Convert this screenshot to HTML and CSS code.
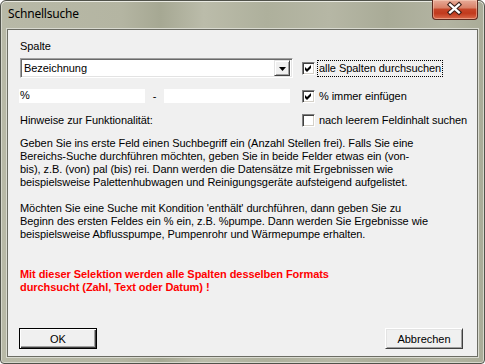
FILE: index.html
```html
<!DOCTYPE html>
<html lang="de">
<head>
  <meta charset="UTF-8">
  <title>Schnellsuche</title>
  <link rel="stylesheet" href="styles.css">
</head>
<body>
  <div class="window">
    <div class="titlebar">
      <span class="title">Schnellsuche</span>
      <span class="close">
        <svg width="46" height="20" viewBox="0 0 46 20">
          <path d="M18.5 5.5 L27.5 13.5 M27.5 5.5 L18.5 13.5" stroke="#3b2019" stroke-width="4.6" stroke-linecap="square"/>
          <path d="M18.5 5.5 L27.5 13.5 M27.5 5.5 L18.5 13.5" stroke="#ffffff" stroke-width="2.4" stroke-linecap="square"/>
        </svg>
      </span>
    </div>

    <div class="client">
      <div class="label">Spalte</div>

      <div class="row row-combo">
        <div class="combo">
          <span class="combo-text">Bezeichnung</span>
          <span class="combo-btn">
            <svg width="7" height="4" viewBox="0 0 7 4"><path d="M0 0 H7 L3.5 4 Z" fill="#000"/></svg>
          </span>
        </div>
        <div class="check">
          <span class="box checked">
            <svg width="9" height="9" viewBox="0 0 9 9"><path d="M1 3 L3 5 L7 1 L7 4 L3 8 L1 6 Z" fill="#000"/></svg>
          </span>
          <span class="check-text focus">alle Spalten durchsuchen</span>
        </div>
      </div>

      <div class="row row-range">
        <div class="field first">%</div>
        <span class="dash">-</span>
        <div class="field"></div>
        <div class="check">
          <span class="box checked">
            <svg width="9" height="9" viewBox="0 0 9 9"><path d="M1 3 L3 5 L7 1 L7 4 L3 8 L1 6 Z" fill="#000"/></svg>
          </span>
          <span class="check-text">% immer einfügen</span>
        </div>
      </div>

      <div class="row row-hint">
        <span class="hint-title">Hinweise zur Funktionalität:</span>
        <div class="check">
          <span class="box"></span>
          <span class="check-text">nach leerem Feldinhalt suchen</span>
        </div>
      </div>

      <p class="info">Geben Sie ins erste Feld einen Suchbegriff ein (Anzahl Stellen frei). Falls Sie eine<br>Bereichs-Suche durchführen möchten, geben Sie in beide Felder etwas ein (von-<br>bis), z.B. (von) pal (bis) rei. Dann werden die Datensätze mit Ergebnissen wie<br>beispielsweise Palettenhubwagen und Reinigungsgeräte aufsteigend aufgelistet.</p>
      <p class="info second">Möchten Sie eine Suche mit Kondition 'enthält' durchführen, dann geben Sie zu<br>Beginn des ersten Feldes ein % ein, z.B. %pumpe. Dann werden Sie Ergebnisse wie<br>beispielsweise Abflusspumpe, Pumpenrohr und Wärmepumpe erhalten.</p>

      <p class="warn">Mit dieser Selektion werden alle Spalten desselben Formats<br>durchsucht (Zahl, Text oder Datum) !</p>

      <div class="buttons">
        <button class="btn default">OK</button>
        <button class="btn">Abbrechen</button>
      </div>
    </div>
  </div>
</body>
</html>
```

FILE: styles.css
```css
* {
  box-sizing: border-box;
}
html, body {
  margin: 0;
}
body {
  width: 485px;
  height: 364px;
  overflow: hidden;
  background: #ffffff;
  font-family: "Liberation Sans", Arial, sans-serif;
  font-size: 11px;
  letter-spacing: -0.06px;
  color: #000;
}
.window {
  width: 485px;
  height: 364px;
  border: 1px solid #50524a;
  border-radius: 6px 6px 4px 4px;
  padding: 0 6px 6px 6px;
  display: flex;
  flex-direction: column;
  background: linear-gradient(90deg, #b8b9a7 0%, #b4b5a2 25%, #a6a893 33%, #bbbcaa 42%, #aeb09c 55%, #b6b7a5 68%, #a9ab97 80%, #b3b4a2 92%, #aaac98 100%);
  box-shadow: inset 0 1px 0 #e9eae2, inset 1px 0 0 #d6d7cc, inset -1px 0 0 #d6d7cc, inset 0 -1px 0 #d6d7cc;
}
.titlebar {
  height: 28px;
  display: flex;
  align-items: flex-start;
}
.title {
  padding: 5px 0 0 1px;
  font-family: "Noto Sans", "Open Sans", sans-serif;
  font-size: 12px;
  line-height: 16px;
  color: #000;
  letter-spacing: -0.2px;
}
.close {
  margin-left: auto;
  margin-top: -1px;
  width: 46px;
  height: 20px;
  border: 1px solid #5e2a1f;
  border-top: none;
  border-radius: 0 0 4px 4px;
  background: linear-gradient(180deg, #e7ab98 0%, #d98269 40%, #c54427 50%, #c13a1d 70%, #d9694a 100%);
  box-shadow: inset 0 0 0 1px rgba(255, 220, 200, 0.45);
  display: flex;
}
.close svg {
  margin: -1px 0 0 -1px;
}
.client {
  flex: 1;
  border: 1px solid #6c6d64;
  box-shadow: 0 0 0 1px #d9dad0;
  background: #f0f0f0;
  padding: 10px 12px 7px 12px;
  display: flex;
  flex-direction: column;
  line-height: 13px;
}
.label {
  height: 13px;
}
.row {
  display: flex;
  align-items: center;
  white-space: nowrap;
}
.row-combo {
  margin-top: 5px;
  height: 20px;
}
.row-range {
  margin-top: 11px;
  height: 14px;
}
.row-hint {
  margin-top: 11px;
  height: 13px;
}
.combo {
  width: 273px;
  height: 20px;
  flex-shrink: 0;
  border: 1px solid;
  border-color: #a0a0a0 #ffffff #ffffff #a0a0a0;
  box-shadow: inset 1px 1px 0 #696969, inset -1px -1px 0 #e3e3e3;
  background: #ffffff;
  display: flex;
  align-items: center;
  padding: 0 2px 0 2px;
}
.combo-text {
  flex: 1;
  padding-left: 1px;
}
.combo-btn {
  width: 16px;
  height: 16px;
  background: #f0f0f0;
  border: 1px solid;
  border-color: #e3e3e3 #404040 #404040 #e3e3e3;
  box-shadow: inset 1px 1px 0 #ffffff, inset -1px -1px 0 #a0a0a0;
  display: flex;
  align-items: center;
  justify-content: center;
}
.combo-btn svg {
  margin: 1px 0 0 1px;
}
.row-combo .check {
  margin-left: 9px;
}
.check {
  display: flex;
  align-items: center;
  flex-shrink: 0;
}
.box {
  width: 13px;
  height: 13px;
  flex-shrink: 0;
  background: #ffffff;
  border: 1px solid;
  border-color: #808080 #ffffff #ffffff #808080;
  box-shadow: inset 1px 1px 0 #404040, inset -1px -1px 0 #d4d0c8;
  display: flex;
  align-items: center;
  justify-content: center;
}
.check-text {
  margin-left: 2px;
  padding: 1px 1px;
  border: 1px solid transparent;
}
.check-text.focus {
  border: 1px dotted #000;
}
.field {
  width: 126px;
  height: 14px;
  flex-shrink: 0;
  background: #ffffff;
  line-height: 13px;
}
.field.first {
  margin-left: -1px;
  padding-left: 1px;
}
.dash {
  width: 19px;
  text-align: center;
}
.row-range .check {
  margin-left: 12px;
}
.hint-title {
  width: 282px;
  flex-shrink: 0;
}
.info {
  margin: 10px 0 0;
  white-space: nowrap;
}
.info.second {
  margin-top: 13px;
}
.warn {
  margin: 27px 0 0;
  color: #ff0000;
  font-weight: bold;
  white-space: nowrap;
}
.buttons {
  margin: auto 2px 0 -1px;
  display: flex;
  justify-content: space-between;
}
.btn {
  width: 78px;
  height: 21px;
  padding: 0;
  font-family: "Liberation Sans", Arial, sans-serif;
  font-size: 11px;
  color: #000;
  background: #f0f0f0;
  border: 1px solid;
  border-color: #ffffff #404040 #404040 #ffffff;
  box-shadow: inset 1px 1px 0 #e3e3e3, inset -1px -1px 0 #a0a0a0;
}
.btn.default {
  border-color: #000;
  box-shadow: inset 1px 1px 0 #ffffff, inset -1px -1px 0 #404040, inset -2px -2px 0 #a0a0a0;
}
```
